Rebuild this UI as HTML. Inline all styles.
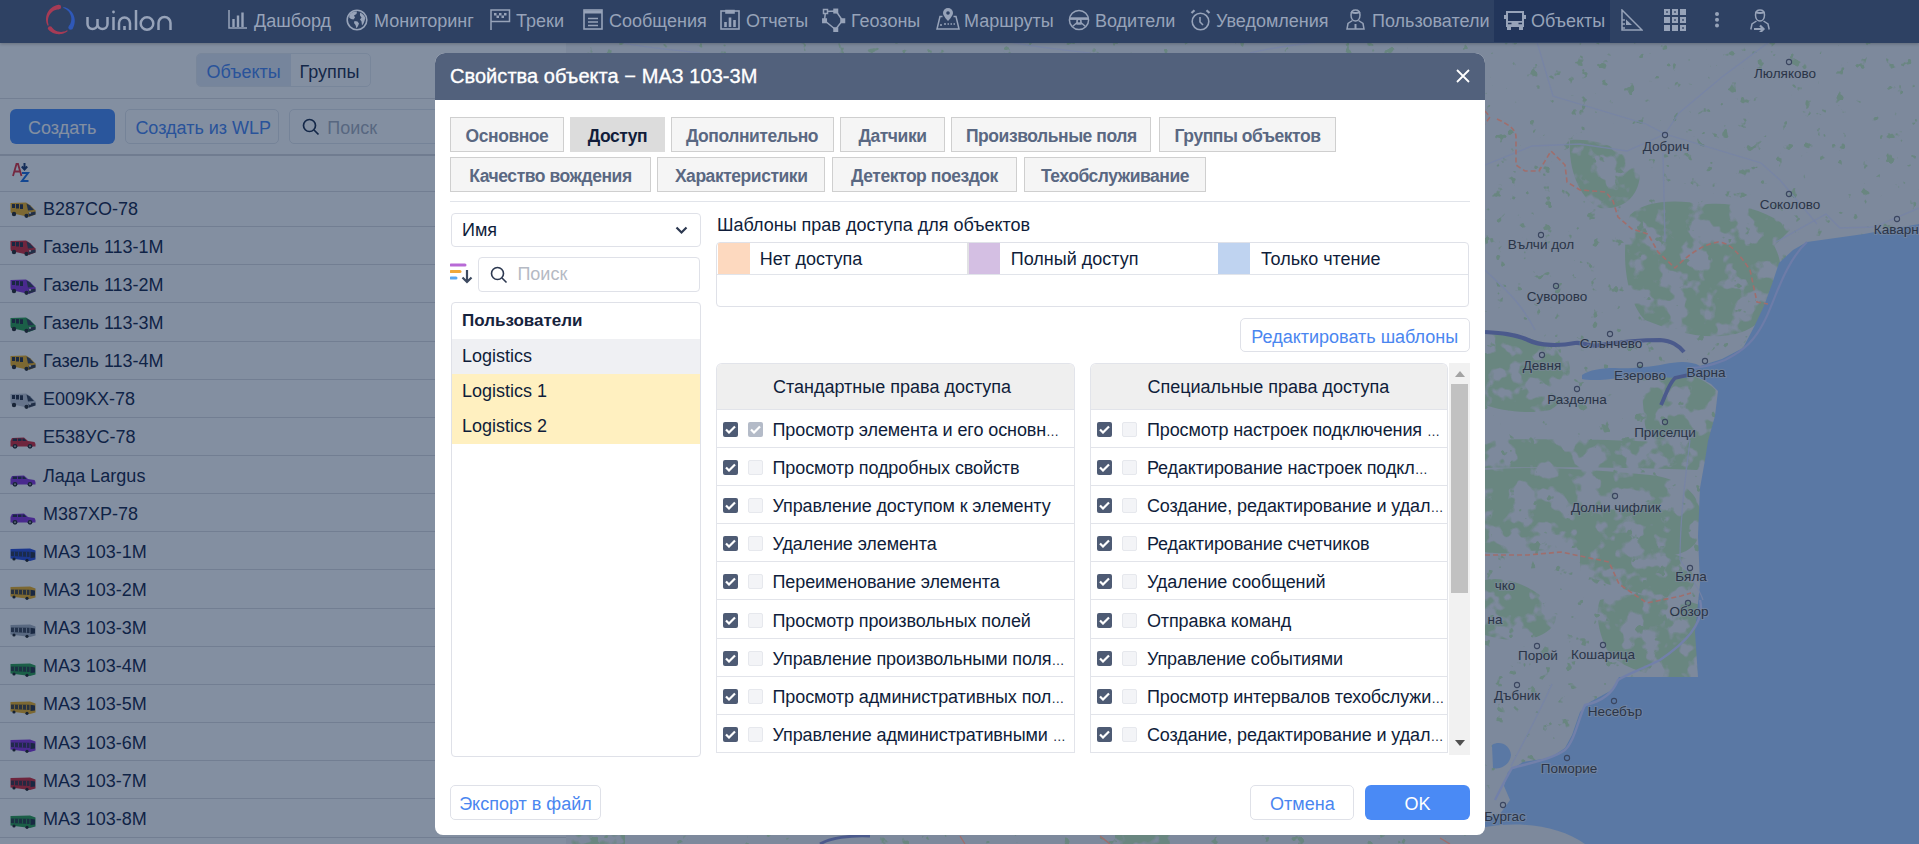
<!DOCTYPE html>
<html><head><meta charset="utf-8">
<style>
*{box-sizing:border-box;margin:0;padding:0}
html,body{width:1919px;height:844px;overflow:hidden;background:#8692a7;font-family:"Liberation Sans",sans-serif;}
.abs{position:absolute}
#hdr{position:absolute;z-index:5;left:0;top:0;width:1919px;height:42.5px;box-shadow:0 1px 3px rgba(0,0,0,0.22);background:#2e4163;color:#97a3b9;font-size:18px}
#hdr .it{position:absolute;top:0;height:42px;line-height:42px;white-space:nowrap}
#hdr svg{position:absolute}
#left{position:absolute;left:0;top:42px;width:566px;height:802px;background:#fff;color:#172648;font-size:18px;overflow:hidden}
#map{position:absolute;left:566px;top:42px;width:1353px;height:802px;overflow:hidden;background:#c9d0dc}
#ov{position:absolute;left:0;top:42px;width:566px;height:802px;background:rgba(7,31,67,0.5)}
.row{position:absolute;left:0;width:566px;height:38.15px;border-bottom:1px solid #dcdde0}
.row .nm{position:absolute;left:43px;top:1.5px;line-height:37px;white-space:nowrap}
.row svg{position:absolute;left:10px;top:11px}
#dlg{position:absolute;left:435px;top:53px;width:1050px;height:782px;background:#fff;border-radius:10px 10px 8px 8px;overflow:hidden;color:#0f1d3a;font-size:18px}
#dh{position:absolute;left:0;top:0;width:1050px;height:46.5px;background:#52617c;color:#fff;font-size:20px;-webkit-text-stroke:0.35px #fff;letter-spacing:0.05px}
.tab{position:absolute;height:35px;background:#f5f5f5;border:1px solid #cfcfcf;color:#5a6882;font-weight:bold;font-size:17.5px;letter-spacing:-0.45px;text-align:center;line-height:33px;padding-top:2px;white-space:nowrap}
.tab.act{background:#dcdcdc;border-color:#dcdcdc;color:#111d3a}
.inp{position:absolute;border:1px solid #dfe1e8;border-radius:4px;background:#fff}
.btn{position:absolute;border:1px solid #dfe1e8;border-radius:5px;background:#fff;color:#4a86f0;text-align:center;white-space:nowrap}
.tbl{position:absolute;top:310px;height:389.5px;border:1px solid #e2e4ea;border-bottom:none;border-radius:6px 6px 0 0;overflow:hidden;background:#fff}
.th{position:absolute;left:0;top:0;width:100%;height:46px;background:#efefef;border-bottom:1px solid #e2e4ea}
.th span{position:absolute;left:56px;top:0;line-height:46px;white-space:nowrap}
.tr{position:absolute;left:0;width:100%;height:38.1px;border-bottom:1px solid #e2e4ea}
.tr .t{position:absolute;left:55.5px;top:2px;line-height:37px;white-space:nowrap;letter-spacing:-0.1px}
.el{font-size:13px;letter-spacing:0}
.cb{position:absolute;top:12px;width:15px;height:15px;border-radius:2px}
.cb1{left:6px;background:#4e5b74}
.cb2{left:31px;background:#f3f4f7;border:1px solid #e6e8ed}
.cb2.g{background:#b4bbc8;border:none}
.cb svg{position:absolute;left:2px;top:3px}
</style></head><body>
<div id="hdr">
<svg style="left:44px;top:4px" width="32" height="32" viewBox="0 0 32 32"><path d="M14.67 0.76 L13.46 0.98 L12.29 1.30 L11.15 1.71 L10.05 2.21 L9.00 2.79 L8.01 3.45 L7.07 4.19 L6.21 4.99 L5.41 5.86 L4.69 6.78 L4.04 7.76 L3.49 8.77 L3.01 9.83 L2.63 10.91 L2.33 12.02 L2.13 13.14 L2.01 14.26 L1.99 15.39 L2.06 16.51 L2.21 17.61 L2.45 18.69 L2.78 19.75 L3.19 20.77 L3.67 21.75 L4.76 21.24 L4.45 20.30 L4.21 19.34 L4.05 18.38 L3.97 17.41 L3.96 16.44 L4.04 15.48 L4.19 14.53 L4.41 13.61 L4.71 12.71 L5.07 11.84 L5.50 11.01 L6.00 10.22 L6.55 9.48 L7.15 8.79 L7.81 8.16 L8.51 7.58 L9.25 7.07 L10.02 6.62 L10.82 6.23 L11.65 5.91 L12.49 5.67 L13.35 5.49 L14.21 5.38 L15.07 5.34Z" fill="#a63b55"/><circle cx="14.87" cy="3.05" r="2.3" fill="#a63b55"/><path d="M4.43 25.71 L5.10 26.36 L5.81 26.96 L6.55 27.52 L7.32 28.03 L8.11 28.48 L8.93 28.89 L9.77 29.24 L10.62 29.54 L11.49 29.78 L12.37 29.97 L13.25 30.10 L14.13 30.18 L15.02 30.20 L15.90 30.17 L16.77 30.08 L17.63 29.94 L18.48 29.75 L19.30 29.50 L20.11 29.21 L20.90 28.87 L21.65 28.48 L22.38 28.05 L23.08 27.57 L23.74 27.06 L23.17 26.24 L22.49 26.61 L21.79 26.93 L21.08 27.20 L20.35 27.43 L19.62 27.62 L18.88 27.75 L18.13 27.84 L17.39 27.89 L16.65 27.88 L15.91 27.83 L15.19 27.74 L14.47 27.60 L13.77 27.42 L13.09 27.19 L12.42 26.93 L11.78 26.63 L11.16 26.28 L10.56 25.91 L10.00 25.50 L9.46 25.05 L8.96 24.58 L8.49 24.08 L8.05 23.55 L7.65 23.01Z" fill="#a63b55"/><circle cx="6.04" cy="24.36" r="2.1" fill="#a63b55"/><path d="M19.49 2.96 L20.55 3.21 L21.59 3.55 L22.60 3.97 L23.58 4.47 L24.53 5.05 L25.42 5.71 L26.27 6.45 L27.06 7.25 L27.79 8.12 L28.44 9.06 L29.03 10.04 L29.53 11.07 L29.95 12.15 L30.29 13.27 L30.54 14.41 L30.69 15.57 L30.76 16.75 L30.72 17.94 L30.59 19.12 L30.37 20.30 L30.05 21.46 L29.64 22.60 L29.13 23.71 L28.53 24.78 L24.76 22.14 L25.29 21.46 L25.77 20.73 L26.18 19.96 L26.54 19.15 L26.83 18.32 L27.05 17.46 L27.21 16.57 L27.30 15.67 L27.31 14.76 L27.25 13.85 L27.11 12.94 L26.90 12.03 L26.62 11.14 L26.26 10.27 L25.83 9.43 L25.33 8.62 L24.77 7.85 L24.14 7.12 L23.45 6.43 L22.70 5.81 L21.90 5.24 L21.06 4.73 L20.16 4.29 L19.24 3.93Z" fill="#2f58b8"/><circle cx="26.65" cy="23.46" r="2.3" fill="#2f58b8"/></svg>
<svg style="left:86px;top:9px" width="88" height="23" viewBox="0 0 88 23" fill="none" stroke="#97a3b9" stroke-width="2.5"><path d="M1.5 8 V15 A5 5 0 0 0 11.5 15 V10 M11.5 15 A5 5 0 0 0 21.5 15 V8"/><path d="M27.5 8 V21"/><circle cx="27.5" cy="3" r="1.4" fill="#97a3b9" stroke="none"/><path d="M33 21 V14 A5.5 5.5 0 0 1 44 14 V21"/><path d="M38.5 17 V21" stroke-width="2.6"/><path d="M50 1 V21"/><circle cx="61" cy="14.5" r="6.3"/><path d="M72.5 21 V14 A6 6 0 0 1 84.5 14 V21"/></svg>
<svg style="left:228px;top:10px" width="20" height="19" viewBox="0 0 20 19" fill="none" stroke="#97a3b9" stroke-width="1.5"><path d="M1 0 V18 H19"/><path d="M5.5 17 V9 M10 17 V5.5 M14.5 17 V2.5" stroke-width="2.4"/></svg>
<div class="it" style="left:254px">Дашборд</div>
<svg style="left:346px;top:9px" width="22" height="22" viewBox="0 0 22 22"><circle cx="11" cy="11" r="9.8" fill="none" stroke="#97a3b9" stroke-width="1.6"/><path d="M3.5 6 C5 3.5 8 2.2 11 2.5 L10.5 5 L8 6.5 L9 8.5 L7.5 10.5 L5 10 L3.2 8.5 Z M8.5 12 L11.5 12.5 L13 14.5 L12 17 L10.5 19.5 L9.5 16 L8 14 Z M14 3.5 C16.5 4.5 18.5 6.5 19.3 9 L18.5 12 L17.5 14.5 L16 16.5 L15.5 12.5 L14 10.5 L15.5 8.5 L14 6.5 Z" fill="#97a3b9"/></svg>
<div class="it" style="left:374px">Мониторинг</div>
<svg style="left:490px;top:9px" width="21" height="21" viewBox="0 0 21 21" fill="none" stroke="#97a3b9" stroke-width="1.5"><path d="M1 21 V1 H19.5 V12.5 H1"/><path d="M4 4 h2.5 v2.5 h-2.5z M9 4 h2.5 v2.5 h-2.5z M14 4 h2.5 v2.5 h-2.5z M6.5 6.5 h2.5 v2.5 h-2.5z M11.5 6.5 h2.5 v2.5 h-2.5z" fill="#97a3b9" stroke="none"/></svg>
<div class="it" style="left:516px">Треки</div>
<svg style="left:583px;top:9px" width="20" height="21" viewBox="0 0 20 21" fill="none" stroke="#97a3b9" stroke-width="1.6"><rect x="1" y="1" width="18" height="19"/><path d="M1 3 H19" stroke-width="3"/><path d="M5 9.5 H15 M5 13 H15 M5 16.5 H15"/></svg>
<div class="it" style="left:609px">Сообщения</div>
<svg style="left:720px;top:8px" width="20" height="22" viewBox="0 0 20 22" fill="none" stroke="#97a3b9" stroke-width="1.6"><rect x="1" y="3" width="18" height="18"/><path d="M6 2.5 H14 V5 H6 Z" fill="#97a3b9"/><path d="M5.5 19 V14 M10 19 V9.5 M14.5 19 V12" stroke-width="2.6"/></svg>
<div class="it" style="left:746px">Отчеты</div>
<svg style="left:822px;top:8px" width="24" height="24" viewBox="0 0 24 24" fill="none" stroke="#97a3b9" stroke-width="1.5"><path d="M3.5 3.5 L14 3 L20.5 12.5 L13.5 21.5 L2.5 12.5 Z"/><rect x="1.5" y="1.5" width="4" height="4" fill="#2e4163"/><rect x="12" y="1.3" width="3.5" height="3.5" fill="#97a3b9"/><rect x="19" y="11" width="3.5" height="3.5" fill="#97a3b9"/><rect x="12" y="20" width="3.5" height="3.5" fill="#97a3b9"/><rect x="0.8" y="11" width="3.5" height="3.5" fill="#97a3b9"/></svg>
<div class="it" style="left:851px">Геозоны</div>
<svg style="left:936px;top:7px" width="24" height="23" viewBox="0 0 24 23"><path d="M12 1 A5 5 0 0 1 17 6 C17 9 12 14 12 14 C12 14 7 9 7 6 A5 5 0 0 1 12 1 Z" fill="#97a3b9"/><circle cx="12" cy="6" r="1.8" fill="#2e4163"/><path d="M6.5 9.5 H4 L1 22 H23 L20 9.5 H17.5" fill="none" stroke="#97a3b9" stroke-width="1.5"/><path d="M4 18 H6 M8 17 H10 M11.5 17 H13 M14.5 17 H16 M17.5 17 H19" stroke="#97a3b9" stroke-width="1.5"/></svg>
<div class="it" style="left:964px">Маршруты</div>
<svg style="left:1068px;top:8.5px" width="22" height="22" viewBox="0 0 22 22" fill="none" stroke="#97a3b9" stroke-width="1.5"><circle cx="11" cy="11" r="9.6"/><rect x="1.5" y="8.3" width="19" height="2.6" fill="#97a3b9" stroke="none"/><circle cx="11" cy="12.3" r="2" stroke-width="1.6"/><path d="M9.2 13.5 L4.5 17.5 M12.8 13.5 L17.5 17.5 M8.5 15 H13.5"/></svg>
<div class="it" style="left:1095px">Водители</div>
<svg style="left:1190px;top:9px" width="21" height="22" viewBox="0 0 21 22" fill="none" stroke="#97a3b9" stroke-width="1.6"><circle cx="10.5" cy="12.5" r="8.3"/><path d="M10 8 V13 L13 16"/><path d="M1.5 4 L4.5 1.2 M19.5 4 L16.5 1.2" stroke-width="2.2"/></svg>
<div class="it" style="left:1216px">Уведомления</div>
<svg style="left:1346px;top:9px" width="19" height="21" viewBox="0 0 19 21" fill="none" stroke="#97a3b9" stroke-width="1.5"><path d="M9.5 1 C6 1 5 3.5 5 6 C5 9.5 7 12 9.5 12 C12 12 14 9.5 14 6 C14 3.5 13 1 9.5 1 Z"/><path d="M5 2.8 Q9.5 5 14 2.8" stroke-width="2"/><path d="M6.5 11.5 L2 14.5 L1 20 H18 L17 14.5 L12.5 11.5"/><path d="M9.5 15 V20" stroke-width="2"/></svg>
<div class="it" style="left:1372px">Пользователи</div>
<div class="abs" style="left:1494px;top:0;width:116px;height:42px;background:#22355a"></div>
<svg style="left:1504px;top:11px" width="22" height="19" viewBox="0 0 22 19"><path d="M3 1 H19 V12 H3 Z" fill="none" stroke="#97a3b9" stroke-width="2"/><path d="M2 10 H20 V16 H2 Z" fill="#97a3b9"/><path d="M3 15 H7 V19 H3 Z M15 15 H19 V19 H15 Z" fill="#97a3b9"/><path d="M0 4 H2 V8 H0 Z M20 4 H22 V8 H20 Z" fill="#97a3b9"/><path d="M4 12.5 H7.5 M14.5 12.5 H18" stroke="#22355a" stroke-width="1.4"/></svg>
<div class="it" style="left:1531px">Объекты</div>
<svg style="left:1621px;top:9px" width="22" height="22" viewBox="0 0 22 22" fill="none" stroke="#97a3b9" stroke-width="1.5"><path d="M1 1 V21 H21 Z"/><path d="M1 11 H4 M1 15 H4 M1 19 H4"/><path d="M5 10.5 L11 16 H5 Z" fill="#97a3b9" stroke="none"/></svg>
<svg style="left:1664px;top:9px" width="22" height="22" viewBox="0 0 22 22" fill="#97a3b9"><rect x="0" y="0" width="6" height="6"/><rect x="8" y="0" width="6" height="6"/><rect x="16" y="0" width="6" height="6"/><rect x="0" y="8" width="6" height="6"/><rect x="8" y="8" width="6" height="6"/><rect x="16" y="8" width="6" height="6"/><rect x="0" y="16" width="6" height="6"/><rect x="8" y="16" width="6" height="6"/><rect x="16" y="16" width="6" height="6"/><g fill="#2e4163"><rect x="2.2" y="2.2" width="1.6" height="1.6"/><rect x="10.2" y="2.2" width="1.6" height="1.6"/><rect x="10.2" y="10.2" width="1.6" height="1.6"/><rect x="18.2" y="10.2" width="1.6" height="1.6"/><rect x="18.2" y="18.2" width="1.6" height="1.6"/></g></svg>
<svg style="left:1714px;top:11px" width="6" height="18" viewBox="0 0 6 18" fill="#97a3b9"><circle cx="3" cy="3" r="2"/><circle cx="3" cy="8.7" r="2"/><circle cx="3" cy="14.5" r="2"/></svg>
<svg style="left:1750px;top:9px" width="20" height="23" viewBox="0 0 20 23" fill="none" stroke="#97a3b9" stroke-width="1.5"><path d="M10 1 C6.5 1 5.5 3.5 5.5 6 C5.5 9.5 7.5 12 10 12 C12.5 12 14.5 9.5 14.5 6 C14.5 3.5 13.5 1 10 1 Z"/><path d="M5.5 3 Q10 5 14.5 3" stroke-width="2"/><path d="M6.5 12 L2 15 L0.8 20.5 M13.5 12 L18 15 L19.2 20.5"/><path d="M4 20 H12 M10 16.5 L13.5 20 L10 23.5" stroke-width="2.2"/></svg>
</div>

<div id="left">
<div class="abs" style="left:195.5px;top:11.3px;width:175px;height:34px;border:1px solid #e9ecf1;border-radius:5px;overflow:hidden"><div class="abs" style="left:0;top:0;width:94px;height:34px;background:#e4eaf5"></div><div class="abs" style="left:10px;top:2px;line-height:32px;color:#4a86f0">Объекты</div><div class="abs" style="left:103px;top:2px;line-height:32px;color:#1f2f4d">Группы</div></div>
<div class="abs" style="left:0;top:56px;width:566px;height:1px;background:#dedfe2"></div>
<div class="abs" style="left:10px;top:67px;width:104.5px;height:34.5px;border-radius:6px;background:#4c8cf5;color:#fff;text-align:center;line-height:34px;padding-top:1.5px">Создать</div>
<div class="abs" style="left:125px;top:67px;width:153.5px;height:34.5px;border-radius:5px;border:1px solid #e3e6ec;color:#4a86f0;text-align:center;line-height:32px;padding-top:1.5px;padding-left:3px">Создать из WLP</div>
<div class="abs" style="left:289.3px;top:67px;width:300px;height:34.5px;border-radius:5px;border:1px solid #e3e6ec"><svg class="abs" style="left:12px;top:8px" width="18" height="18" viewBox="0 0 18 18" fill="none" stroke="#1f2f4d" stroke-width="1.7"><circle cx="7.5" cy="7.5" r="6"/><path d="M12 12 L16.5 16.5"/></svg><div class="abs" style="left:37px;top:1.5px;line-height:32px;color:#a8afbc">Поиск</div></div>
<div class="abs" style="left:0;top:112px;width:566px;height:2px;background:#d8d9dc"></div>
<svg class="abs" style="left:12px;top:120px" width="22" height="21" viewBox="0 0 22 21"><path d="M1 14 L4.5 2 H6 L9.5 14 M2.5 9.5 H8" fill="none" stroke="#e0303c" stroke-width="1.8"/><path d="M12.5 1 V6.5 M9.8 4.5 L12.5 7.5 L15.2 4.5" fill="none" stroke="#1f3a6e" stroke-width="2"/><path d="M10 11 H16 L10 19 H16.5" fill="none" stroke="#1f6fe0" stroke-width="2"/></svg>
<div class="abs" style="left:0;top:149px;width:566px;height:1px;background:#dcdde0"></div>
<div class="row" style="top:147.00px"><svg width="26" height="16" viewBox="0 0 26 16" style="top:13.3px"><path d="M0.5 1 L16 0.5 L20 3 L25.5 8.5 L25.5 12.5 L19 15 L1 11 L0.5 9 Z" fill="#f0b020"/><path d="M2 2 H5 V6 H2 Z M6 2 H9 V6.5 H6 Z M10 2.2 H13 V7 H10 Z" fill="#2b3140"/><path d="M16.5 1.5 L19.5 3.2 L24 8 L18 8.5 Z" fill="#3a4252"/><path d="M18.5 11 L25.5 9.5 L25.5 12.5 L19 14.5 Z" fill="#3a3f4a"/><circle cx="4" cy="12" r="2.2" fill="#2a2a2a"/><circle cx="16.5" cy="13.8" r="2.1" fill="#2a2a2a"/><rect x="19" y="10.3" width="2" height="1.3" fill="#fff"/></svg><div class="nm">B287CO-78</div></div>
<div class="row" style="top:185.15px"><svg width="26" height="16" viewBox="0 0 26 16" style="top:13.3px"><path d="M0.5 1 L16 0.5 L20 3 L25.5 8.5 L25.5 12.5 L19 15 L1 11 L0.5 9 Z" fill="#d42a36"/><path d="M2 2 H5 V6 H2 Z M6 2 H9 V6.5 H6 Z M10 2.2 H13 V7 H10 Z" fill="#2b3140"/><path d="M16.5 1.5 L19.5 3.2 L24 8 L18 8.5 Z" fill="#3a4252"/><path d="M18.5 11 L25.5 9.5 L25.5 12.5 L19 14.5 Z" fill="#3a3f4a"/><circle cx="4" cy="12" r="2.2" fill="#2a2a2a"/><circle cx="16.5" cy="13.8" r="2.1" fill="#2a2a2a"/><rect x="19" y="10.3" width="2" height="1.3" fill="#fff"/></svg><div class="nm">Газель 113-1M</div></div>
<div class="row" style="top:223.30px"><svg width="26" height="16" viewBox="0 0 26 16" style="top:13.3px"><path d="M0.5 1 L16 0.5 L20 3 L25.5 8.5 L25.5 12.5 L19 15 L1 11 L0.5 9 Z" fill="#8a35d8"/><path d="M2 2 H5 V6 H2 Z M6 2 H9 V6.5 H6 Z M10 2.2 H13 V7 H10 Z" fill="#2b3140"/><path d="M16.5 1.5 L19.5 3.2 L24 8 L18 8.5 Z" fill="#3a4252"/><path d="M18.5 11 L25.5 9.5 L25.5 12.5 L19 14.5 Z" fill="#3a3f4a"/><circle cx="4" cy="12" r="2.2" fill="#2a2a2a"/><circle cx="16.5" cy="13.8" r="2.1" fill="#2a2a2a"/><rect x="19" y="10.3" width="2" height="1.3" fill="#fff"/></svg><div class="nm">Газель 113-2M</div></div>
<div class="row" style="top:261.45px"><svg width="26" height="16" viewBox="0 0 26 16" style="top:13.3px"><path d="M0.5 1 L16 0.5 L20 3 L25.5 8.5 L25.5 12.5 L19 15 L1 11 L0.5 9 Z" fill="#2f9e4c"/><path d="M2 2 H5 V6 H2 Z M6 2 H9 V6.5 H6 Z M10 2.2 H13 V7 H10 Z" fill="#2b3140"/><path d="M16.5 1.5 L19.5 3.2 L24 8 L18 8.5 Z" fill="#3a4252"/><path d="M18.5 11 L25.5 9.5 L25.5 12.5 L19 14.5 Z" fill="#3a3f4a"/><circle cx="4" cy="12" r="2.2" fill="#2a2a2a"/><circle cx="16.5" cy="13.8" r="2.1" fill="#2a2a2a"/><rect x="19" y="10.3" width="2" height="1.3" fill="#fff"/></svg><div class="nm">Газель 113-3M</div></div>
<div class="row" style="top:299.60px"><svg width="26" height="16" viewBox="0 0 26 16" style="top:13.3px"><path d="M0.5 1 L16 0.5 L20 3 L25.5 8.5 L25.5 12.5 L19 15 L1 11 L0.5 9 Z" fill="#f0b020"/><path d="M2 2 H5 V6 H2 Z M6 2 H9 V6.5 H6 Z M10 2.2 H13 V7 H10 Z" fill="#2b3140"/><path d="M16.5 1.5 L19.5 3.2 L24 8 L18 8.5 Z" fill="#3a4252"/><path d="M18.5 11 L25.5 9.5 L25.5 12.5 L19 14.5 Z" fill="#3a3f4a"/><circle cx="4" cy="12" r="2.2" fill="#2a2a2a"/><circle cx="16.5" cy="13.8" r="2.1" fill="#2a2a2a"/><rect x="19" y="10.3" width="2" height="1.3" fill="#fff"/></svg><div class="nm">Газель 113-4M</div></div>
<div class="row" style="top:337.75px"><svg width="26" height="16" viewBox="0 0 26 16" style="top:13.3px"><path d="M0.5 1 L16 0.5 L20 3 L25.5 8.5 L25.5 12.5 L19 15 L1 11 L0.5 9 Z" fill="#c4c9d2"/><path d="M2 2 H5 V6 H2 Z M6 2 H9 V6.5 H6 Z M10 2.2 H13 V7 H10 Z" fill="#2b3140"/><path d="M16.5 1.5 L19.5 3.2 L24 8 L18 8.5 Z" fill="#3a4252"/><path d="M18.5 11 L25.5 9.5 L25.5 12.5 L19 14.5 Z" fill="#3a3f4a"/><circle cx="4" cy="12" r="2.2" fill="#2a2a2a"/><circle cx="16.5" cy="13.8" r="2.1" fill="#2a2a2a"/><rect x="19" y="10.3" width="2" height="1.3" fill="#fff"/></svg><div class="nm">E009KX-78</div></div>
<div class="row" style="top:375.90px"><svg width="26" height="12" viewBox="0 0 26 12" style="top:19.2px"><path d="M0.5 4 L2 1 L14 0.5 L18 4 L24.5 5 L25.5 7 L25.5 9.5 L0.5 9.5 Z" fill="#d42a36"/><path d="M3 1.5 H7 V4 H2.5 Z M8 1.5 H11.5 V4 H8 Z M12.5 1.5 H14 L16.5 4 H12.5 Z" fill="#2b3140"/><circle cx="5" cy="9.3" r="2.4" fill="#2a2a2a"/><circle cx="20" cy="9.3" r="2.4" fill="#2a2a2a"/><circle cx="5" cy="9.3" r="1" fill="#aaa"/><circle cx="20" cy="9.3" r="1" fill="#aaa"/></svg><div class="nm">E538УС-78</div></div>
<div class="row" style="top:414.05px"><svg width="26" height="12" viewBox="0 0 26 12" style="top:19.2px"><path d="M0.5 4 L2 1 L14 0.5 L18 4 L24.5 5 L25.5 7 L25.5 9.5 L0.5 9.5 Z" fill="#8a35d8"/><path d="M3 1.5 H7 V4 H2.5 Z M8 1.5 H11.5 V4 H8 Z M12.5 1.5 H14 L16.5 4 H12.5 Z" fill="#2b3140"/><circle cx="5" cy="9.3" r="2.4" fill="#2a2a2a"/><circle cx="20" cy="9.3" r="2.4" fill="#2a2a2a"/><circle cx="5" cy="9.3" r="1" fill="#aaa"/><circle cx="20" cy="9.3" r="1" fill="#aaa"/></svg><div class="nm">Лада Largus</div></div>
<div class="row" style="top:452.20px"><svg width="26" height="12" viewBox="0 0 26 12" style="top:19.2px"><path d="M0.5 4 L2 1 L14 0.5 L18 4 L24.5 5 L25.5 7 L25.5 9.5 L0.5 9.5 Z" fill="#8a35d8"/><path d="M3 1.5 H7 V4 H2.5 Z M8 1.5 H11.5 V4 H8 Z M12.5 1.5 H14 L16.5 4 H12.5 Z" fill="#2b3140"/><circle cx="5" cy="9.3" r="2.4" fill="#2a2a2a"/><circle cx="20" cy="9.3" r="2.4" fill="#2a2a2a"/><circle cx="5" cy="9.3" r="1" fill="#aaa"/><circle cx="20" cy="9.3" r="1" fill="#aaa"/></svg><div class="nm">M387XP-78</div></div>
<div class="row" style="top:490.35px"><svg width="26" height="14" viewBox="0 0 26 14" style="top:15.8px"><path d="M0.5 1 L20 0.5 L25.5 2.5 L25.5 11.5 L20 13 L0.5 10.5 Z" fill="#2e4fd6"/><path d="M1 3.5 L19.5 3.8 L19.5 9 L1 8 Z" fill="#2b3140" opacity=".85"/><path d="M20.5 3.8 L25 4.5 L25 9.5 L20.5 10 Z" fill="#2b3140"/><path d="M4.5 3.5 V8.2 M8.5 3.6 V8.4 M12.5 3.7 V8.6 M16.5 3.7 V8.8" stroke="#2e4fd6" stroke-width="0.9"/><circle cx="4" cy="11" r="1.6" fill="#222"/><circle cx="17" cy="12.3" r="1.6" fill="#222"/></svg><div class="nm">МАЗ 103-1М</div></div>
<div class="row" style="top:528.50px"><svg width="26" height="14" viewBox="0 0 26 14" style="top:15.8px"><path d="M0.5 1 L20 0.5 L25.5 2.5 L25.5 11.5 L20 13 L0.5 10.5 Z" fill="#f0b020"/><path d="M1 3.5 L19.5 3.8 L19.5 9 L1 8 Z" fill="#2b3140" opacity=".85"/><path d="M20.5 3.8 L25 4.5 L25 9.5 L20.5 10 Z" fill="#2b3140"/><path d="M4.5 3.5 V8.2 M8.5 3.6 V8.4 M12.5 3.7 V8.6 M16.5 3.7 V8.8" stroke="#f0b020" stroke-width="0.9"/><circle cx="4" cy="11" r="1.6" fill="#222"/><circle cx="17" cy="12.3" r="1.6" fill="#222"/></svg><div class="nm">МАЗ 103-2М</div></div>
<div class="row" style="top:566.65px"><svg width="26" height="14" viewBox="0 0 26 14" style="top:15.8px"><path d="M0.5 1 L20 0.5 L25.5 2.5 L25.5 11.5 L20 13 L0.5 10.5 Z" fill="#aab2be"/><path d="M1 3.5 L19.5 3.8 L19.5 9 L1 8 Z" fill="#2b3140" opacity=".85"/><path d="M20.5 3.8 L25 4.5 L25 9.5 L20.5 10 Z" fill="#2b3140"/><path d="M4.5 3.5 V8.2 M8.5 3.6 V8.4 M12.5 3.7 V8.6 M16.5 3.7 V8.8" stroke="#aab2be" stroke-width="0.9"/><circle cx="4" cy="11" r="1.6" fill="#222"/><circle cx="17" cy="12.3" r="1.6" fill="#222"/></svg><div class="nm">МАЗ 103-3М</div></div>
<div class="row" style="top:604.80px"><svg width="26" height="14" viewBox="0 0 26 14" style="top:15.8px"><path d="M0.5 1 L20 0.5 L25.5 2.5 L25.5 11.5 L20 13 L0.5 10.5 Z" fill="#2f9e4c"/><path d="M1 3.5 L19.5 3.8 L19.5 9 L1 8 Z" fill="#2b3140" opacity=".85"/><path d="M20.5 3.8 L25 4.5 L25 9.5 L20.5 10 Z" fill="#2b3140"/><path d="M4.5 3.5 V8.2 M8.5 3.6 V8.4 M12.5 3.7 V8.6 M16.5 3.7 V8.8" stroke="#2f9e4c" stroke-width="0.9"/><circle cx="4" cy="11" r="1.6" fill="#222"/><circle cx="17" cy="12.3" r="1.6" fill="#222"/></svg><div class="nm">МАЗ 103-4М</div></div>
<div class="row" style="top:642.95px"><svg width="26" height="14" viewBox="0 0 26 14" style="top:15.8px"><path d="M0.5 1 L20 0.5 L25.5 2.5 L25.5 11.5 L20 13 L0.5 10.5 Z" fill="#f0b020"/><path d="M1 3.5 L19.5 3.8 L19.5 9 L1 8 Z" fill="#2b3140" opacity=".85"/><path d="M20.5 3.8 L25 4.5 L25 9.5 L20.5 10 Z" fill="#2b3140"/><path d="M4.5 3.5 V8.2 M8.5 3.6 V8.4 M12.5 3.7 V8.6 M16.5 3.7 V8.8" stroke="#f0b020" stroke-width="0.9"/><circle cx="4" cy="11" r="1.6" fill="#222"/><circle cx="17" cy="12.3" r="1.6" fill="#222"/></svg><div class="nm">МАЗ 103-5М</div></div>
<div class="row" style="top:681.10px"><svg width="26" height="14" viewBox="0 0 26 14" style="top:15.8px"><path d="M0.5 1 L20 0.5 L25.5 2.5 L25.5 11.5 L20 13 L0.5 10.5 Z" fill="#8a35d8"/><path d="M1 3.5 L19.5 3.8 L19.5 9 L1 8 Z" fill="#2b3140" opacity=".85"/><path d="M20.5 3.8 L25 4.5 L25 9.5 L20.5 10 Z" fill="#2b3140"/><path d="M4.5 3.5 V8.2 M8.5 3.6 V8.4 M12.5 3.7 V8.6 M16.5 3.7 V8.8" stroke="#8a35d8" stroke-width="0.9"/><circle cx="4" cy="11" r="1.6" fill="#222"/><circle cx="17" cy="12.3" r="1.6" fill="#222"/></svg><div class="nm">МАЗ 103-6М</div></div>
<div class="row" style="top:719.25px"><svg width="26" height="14" viewBox="0 0 26 14" style="top:15.8px"><path d="M0.5 1 L20 0.5 L25.5 2.5 L25.5 11.5 L20 13 L0.5 10.5 Z" fill="#d42a36"/><path d="M1 3.5 L19.5 3.8 L19.5 9 L1 8 Z" fill="#2b3140" opacity=".85"/><path d="M20.5 3.8 L25 4.5 L25 9.5 L20.5 10 Z" fill="#2b3140"/><path d="M4.5 3.5 V8.2 M8.5 3.6 V8.4 M12.5 3.7 V8.6 M16.5 3.7 V8.8" stroke="#d42a36" stroke-width="0.9"/><circle cx="4" cy="11" r="1.6" fill="#222"/><circle cx="17" cy="12.3" r="1.6" fill="#222"/></svg><div class="nm">МАЗ 103-7М</div></div>
<div class="row" style="top:757.40px"><svg width="26" height="14" viewBox="0 0 26 14" style="top:15.8px"><path d="M0.5 1 L20 0.5 L25.5 2.5 L25.5 11.5 L20 13 L0.5 10.5 Z" fill="#2f9e4c"/><path d="M1 3.5 L19.5 3.8 L19.5 9 L1 8 Z" fill="#2b3140" opacity=".85"/><path d="M20.5 3.8 L25 4.5 L25 9.5 L20.5 10 Z" fill="#2b3140"/><path d="M4.5 3.5 V8.2 M8.5 3.6 V8.4 M12.5 3.7 V8.6 M16.5 3.7 V8.8" stroke="#2f9e4c" stroke-width="0.9"/><circle cx="4" cy="11" r="1.6" fill="#222"/><circle cx="17" cy="12.3" r="1.6" fill="#222"/></svg><div class="nm">МАЗ 103-8М</div></div>
</div>
<div id="map"><svg width="1353" height="802" viewBox="566 42 1353 802" style="position:absolute;left:0;top:0">
<defs>
<filter id="fd" x="566" y="42" width="1353" height="802" filterUnits="userSpaceOnUse" color-interpolation-filters="sRGB">
<feTurbulence type="fractalNoise" baseFrequency="0.045" numOctaves="3" seed="7" result="n"/>
<feColorMatrix in="n" type="matrix" values="0 0 0 0 0.41  0 0 0 0 0.525  0 0 0 0 0.5  12 0 0 0 -5.2" result="g"/>
<feComposite in="g" in2="SourceGraphic" operator="in"/>
</filter>
<filter id="fs" x="566" y="42" width="1353" height="802" filterUnits="userSpaceOnUse" color-interpolation-filters="sRGB">
<feTurbulence type="fractalNoise" baseFrequency="0.085" numOctaves="3" seed="11" result="n"/>
<feColorMatrix in="n" type="matrix" values="0 0 0 0 0.41  0 0 0 0 0.525  0 0 0 0 0.5  16 0 0 0 -11.2" result="g"/>
<feComposite in="g" in2="SourceGraphic" operator="in"/>
</filter>
</defs>
<rect x="566" y="42" width="1353" height="802" fill="#7d899c"/>
<g filter="url(#fs)"><rect x="566" y="42" width="1353" height="802" fill="#000"/></g>
<g filter="url(#fd)">
<path d="M1630 215 C1650 195 1700 200 1730 212 C1760 222 1785 245 1780 280 C1775 310 1760 330 1730 335 C1700 340 1670 330 1645 320 C1625 300 1620 250 1630 215Z" fill="#000"/>
<path d="M1485 335 C1510 330 1540 340 1565 352 C1575 370 1570 400 1550 410 C1525 415 1500 410 1485 405Z" fill="#000"/>
<path d="M1640 372 C1670 365 1705 375 1720 395 C1725 425 1715 455 1700 470 C1675 470 1650 450 1645 425Z" fill="#000"/>
<path d="M1485 470 C1530 465 1600 470 1650 475 C1690 480 1705 500 1700 530 C1698 550 1680 560 1640 555 C1600 550 1560 548 1520 552 C1500 555 1485 552 1485 552Z" fill="#000"/>
<path d="M1580 540 C1610 535 1650 545 1690 560 C1700 580 1695 595 1670 598 C1640 595 1600 585 1580 570Z" fill="#000"/>
<path d="M1600 600 C1630 590 1670 595 1700 605 C1702 630 1700 660 1698 677 C1660 680 1630 672 1610 655 C1598 635 1595 612 1600 600Z" fill="#000"/>
<path d="M1485 580 C1510 575 1540 590 1555 610 C1560 625 1545 640 1515 640 C1500 640 1485 635 1485 635Z" fill="#000"/>
<path d="M1485 440 C1550 438 1650 440 1705 445 L1700 470 C1650 468 1550 466 1485 468Z" fill="#000"/>
<path d="M1570 140 C1600 138 1630 150 1640 175 C1638 200 1620 210 1600 208 C1580 200 1568 170 1570 140Z" fill="#000"/>
<path d="M1700 205 C1730 200 1770 210 1790 230 L1770 250 C1740 248 1710 240 1700 225Z" fill="#000"/>
<path d="M566 832 H625 V844 H566Z" fill="#000"/>
<path d="M1115 832 H1170 V844 H1115Z" fill="#000"/>
</g>
<path d="M1919 224 L1864 234 L1807 242 L1793 250 L1779 263 L1772 284 L1764 306 L1754 327 L1743 348 L1722 359 L1700 366 L1684 371 L1700 378 L1711 384 L1718 391 L1715 416 L1708 441 L1705 460 L1700 488 L1698 536 L1700 584 L1695 632 L1698 677 L1648 677 L1619 677 L1612 690 L1590 702 L1580 712 L1572 735 L1565 748 L1550 758 L1523 762 L1508 772 L1504 786 L1510 800 L1500 814 L1480 818 L1480 844 L1919 844 Z" fill="#5a78a4"/>
<path d="M1582 375 C1590 370 1600 368 1615 368 C1630 369 1650 367 1665 364 C1675 362 1690 360 1700 366 L1690 378 C1670 378 1640 377 1620 378 C1605 380 1590 381 1582 379Z" fill="#5a78a4"/>
<path d="M1480 828 C1520 820 1560 826 1585 844 H1480Z" fill="#7d899c"/>
<path d="M1492 745 C1500 740 1510 745 1511 755 C1510 765 1500 770 1493 768Z" fill="#5a78a4"/>
<path d="M1537 42 L1553 96 L1646 124 L1665 134" fill="none" stroke="#7784a6" stroke-width="1.3" opacity="0.85"/>
<path d="M1665 134 L1679 113 L1722 77 L1769 42" fill="none" stroke="#7784a6" stroke-width="1.3" opacity="0.85"/>
<path d="M1665 134 L1761 163 L1780 180 L1817 224" fill="none" stroke="#7784a6" stroke-width="1.3" opacity="0.85"/>
<path d="M1485 165 L1532 146 L1580 144 L1627 151 L1665 134" fill="none" stroke="#7784a6" stroke-width="1.3" opacity="0.85"/>
<path d="M1663 153 L1665 242" fill="none" stroke="#7784a6" stroke-width="1.3" opacity="0.85"/>
<path d="M1485 270 C1500 285 1520 300 1535 330" fill="none" stroke="#7784a6" stroke-width="1.3" opacity="0.85"/>
<path d="M1776 242 L1826 214 L1840 228 L1874 227 L1919 208" fill="none" stroke="#7784a6" stroke-width="1.3" opacity="0.85"/>
<path d="M1690 440 C1685 480 1680 520 1680 560" fill="none" stroke="#7784a6" stroke-width="1.3" opacity="0.85"/>
<path d="M1680 560 C1690 575 1700 590 1703 600" fill="none" stroke="#7784a6" stroke-width="1.3" opacity="0.85"/>
<path d="M1552 684 C1545 700 1530 730 1511 766" fill="none" stroke="#7784a6" stroke-width="1.3" opacity="0.85"/>
<path d="M620 42 C640 48 680 50 700 53" fill="none" stroke="#7784a6" stroke-width="1.3" opacity="0.85"/>
<path d="M1010 42 C1040 48 1070 50 1090 53" fill="none" stroke="#7784a6" stroke-width="1.3" opacity="0.85"/>
<path d="M1250 53 C1270 48 1290 45 1320 42" fill="none" stroke="#7784a6" stroke-width="1.3" opacity="0.85"/>
<path d="M1807 242 C1785 262 1775 300 1765 320 C1755 340 1745 350 1725 360 C1710 366 1700 368 1690 368" fill="none" stroke="#6d7ca8" stroke-width="2.2"/>
<path d="M1700 600 C1705 620 1690 640 1660 660 C1640 670 1625 675 1618 680 C1612 695 1600 702 1585 705 C1578 720 1575 740 1565 750 C1550 760 1530 763 1512 768 C1505 780 1500 790 1495 800" fill="none" stroke="#7280aa" stroke-width="2.4"/>
<path d="M1485 332 C1500 333 1515 334 1528 340 C1540 346 1560 346 1575 343 C1587 342 1590 348 1600 345 C1620 342 1640 340 1660 340 C1672 341 1678 345 1684 352" fill="none" stroke="#4b5a8c" stroke-width="4.2"/>
<path d="M1688 375 L1675 378 C1668 385 1666 395 1661 405" fill="none" stroke="#4b5a8c" stroke-width="3.8"/>
<path d="M820 844 C830 838 850 835 870 836" fill="none" stroke="#4b5a8c" stroke-width="3"/>
<path d="M1485 111 L1490 117 L1485 124 M1497 119 C1510 125 1516 130 1516 137 L1516 165 L1525 171 L1539 171 L1551 151 L1565 165 L1567 182 L1580 190 L1606 192 L1613 201 L1618 217 L1632 229 L1648 234 L1658 252 L1675 268 C1685 258 1700 245 1718 242 C1730 242 1740 255 1750 270 L1757 302 L1768 304" fill="none" stroke="#a06e6c" stroke-width="1.6" stroke-dasharray="5 3"/>
<path d="M1485 555 L1528 555 L1561 552 L1609 562 L1619 584 L1647 603 L1681 596 L1691 593" fill="none" stroke="#a06e6c" stroke-width="1.6" stroke-dasharray="5 3"/>
<path d="M1100 836 L1110 844 M960 836 L965 844 M1440 838 L1450 844" stroke="#a06e6c" stroke-width="1.4"/>
<circle cx="1789" cy="62" r="2.6" fill="none" stroke="#3b4660" stroke-width="1.1"/>
<circle cx="1665" cy="135" r="2.6" fill="none" stroke="#3b4660" stroke-width="1.1"/>
<circle cx="1789" cy="194" r="2.6" fill="none" stroke="#3b4660" stroke-width="1.1"/>
<circle cx="1897" cy="219" r="2.6" fill="none" stroke="#3b4660" stroke-width="1.1"/>
<circle cx="1541" cy="235" r="2.6" fill="none" stroke="#3b4660" stroke-width="1.1"/>
<circle cx="1556" cy="286" r="2.6" fill="none" stroke="#3b4660" stroke-width="1.1"/>
<circle cx="1610" cy="334" r="2.6" fill="none" stroke="#3b4660" stroke-width="1.1"/>
<circle cx="1542" cy="355" r="2.6" fill="none" stroke="#3b4660" stroke-width="1.1"/>
<circle cx="1640" cy="365" r="2.6" fill="none" stroke="#3b4660" stroke-width="1.1"/>
<circle cx="1705" cy="361" r="2.6" fill="none" stroke="#3b4660" stroke-width="1.1"/>
<circle cx="1577" cy="389" r="2.6" fill="none" stroke="#3b4660" stroke-width="1.1"/>
<circle cx="1665" cy="422" r="2.6" fill="none" stroke="#3b4660" stroke-width="1.1"/>
<circle cx="1615" cy="496" r="2.6" fill="none" stroke="#3b4660" stroke-width="1.1"/>
<circle cx="1690" cy="568" r="2.6" fill="none" stroke="#3b4660" stroke-width="1.1"/>
<circle cx="1688" cy="603" r="2.6" fill="none" stroke="#3b4660" stroke-width="1.1"/>
<circle cx="1537" cy="646" r="2.6" fill="none" stroke="#3b4660" stroke-width="1.1"/>
<circle cx="1603" cy="645" r="2.6" fill="none" stroke="#3b4660" stroke-width="1.1"/>
<circle cx="1517" cy="685" r="2.6" fill="none" stroke="#3b4660" stroke-width="1.1"/>
<circle cx="1614" cy="701" r="2.6" fill="none" stroke="#3b4660" stroke-width="1.1"/>
<circle cx="1567" cy="758" r="2.6" fill="none" stroke="#3b4660" stroke-width="1.1"/>
<circle cx="1503" cy="805" r="2.6" fill="none" stroke="#3b4660" stroke-width="1.1"/>
<text x="1785" y="77.5" text-anchor="middle" font-family="Liberation Sans" font-size="13.5" fill="#2a3447" stroke="#7d899c" stroke-width="2" stroke-opacity="0.6" paint-order="stroke">Люляково</text>
<text x="1666" y="150.5" text-anchor="middle" font-family="Liberation Sans" font-size="13.5" fill="#2a3447" stroke="#7d899c" stroke-width="2" stroke-opacity="0.6" paint-order="stroke">Добрич</text>
<text x="1790" y="208.5" text-anchor="middle" font-family="Liberation Sans" font-size="13.5" fill="#2a3447" stroke="#7d899c" stroke-width="2" stroke-opacity="0.6" paint-order="stroke">Соколово</text>
<text x="1900" y="233.5" text-anchor="middle" font-family="Liberation Sans" font-size="13.5" fill="#2a3447" stroke="#7d899c" stroke-width="2" stroke-opacity="0.6" paint-order="stroke">Каварна</text>
<text x="1541" y="248.5" text-anchor="middle" font-family="Liberation Sans" font-size="13.5" fill="#2a3447" stroke="#7d899c" stroke-width="2" stroke-opacity="0.6" paint-order="stroke">Вълчи дол</text>
<text x="1557" y="300.5" text-anchor="middle" font-family="Liberation Sans" font-size="13.5" fill="#2a3447" stroke="#7d899c" stroke-width="2" stroke-opacity="0.6" paint-order="stroke">Суворово</text>
<text x="1611" y="347.5" text-anchor="middle" font-family="Liberation Sans" font-size="13.5" fill="#2a3447" stroke="#7d899c" stroke-width="2" stroke-opacity="0.6" paint-order="stroke">Слънчево</text>
<text x="1542" y="369.5" text-anchor="middle" font-family="Liberation Sans" font-size="13.5" fill="#2a3447" stroke="#7d899c" stroke-width="2" stroke-opacity="0.6" paint-order="stroke">Девня</text>
<text x="1640" y="379.5" text-anchor="middle" font-family="Liberation Sans" font-size="13.5" fill="#2a3447" stroke="#7d899c" stroke-width="2" stroke-opacity="0.6" paint-order="stroke">Езерово</text>
<text x="1706" y="376.5" text-anchor="middle" font-family="Liberation Sans" font-size="13.5" fill="#2a3447" stroke="#7d899c" stroke-width="2" stroke-opacity="0.6" paint-order="stroke">Варна</text>
<text x="1577" y="403.5" text-anchor="middle" font-family="Liberation Sans" font-size="13.5" fill="#2a3447" stroke="#7d899c" stroke-width="2" stroke-opacity="0.6" paint-order="stroke">Разделна</text>
<text x="1665" y="436.5" text-anchor="middle" font-family="Liberation Sans" font-size="13.5" fill="#2a3447" stroke="#7d899c" stroke-width="2" stroke-opacity="0.6" paint-order="stroke">Приселци</text>
<text x="1616" y="511.5" text-anchor="middle" font-family="Liberation Sans" font-size="13.5" fill="#2a3447" stroke="#7d899c" stroke-width="2" stroke-opacity="0.6" paint-order="stroke">Долни чифлик</text>
<text x="1691" y="580.5" text-anchor="middle" font-family="Liberation Sans" font-size="13.5" fill="#2a3447" stroke="#7d899c" stroke-width="2" stroke-opacity="0.6" paint-order="stroke">Бяла</text>
<text x="1689" y="615.5" text-anchor="middle" font-family="Liberation Sans" font-size="13.5" fill="#2a3447" stroke="#7d899c" stroke-width="2" stroke-opacity="0.6" paint-order="stroke">Обзор</text>
<text x="1538" y="659.5" text-anchor="middle" font-family="Liberation Sans" font-size="13.5" fill="#2a3447" stroke="#7d899c" stroke-width="2" stroke-opacity="0.6" paint-order="stroke">Порой</text>
<text x="1603" y="658.5" text-anchor="middle" font-family="Liberation Sans" font-size="13.5" fill="#2a3447" stroke="#7d899c" stroke-width="2" stroke-opacity="0.6" paint-order="stroke">Кошарица</text>
<text x="1517" y="699.5" text-anchor="middle" font-family="Liberation Sans" font-size="13.5" fill="#2a3447" stroke="#7d899c" stroke-width="2" stroke-opacity="0.6" paint-order="stroke">Дъбник</text>
<text x="1615" y="715.5" text-anchor="middle" font-family="Liberation Sans" font-size="13.5" fill="#2a3447" stroke="#7d899c" stroke-width="2" stroke-opacity="0.6" paint-order="stroke">Несебър</text>
<text x="1569" y="772.5" text-anchor="middle" font-family="Liberation Sans" font-size="13.5" fill="#2a3447" stroke="#7d899c" stroke-width="2" stroke-opacity="0.6" paint-order="stroke">Поморие</text>
<text x="1505" y="820.5" text-anchor="middle" font-family="Liberation Sans" font-size="13.5" fill="#2a3447" stroke="#7d899c" stroke-width="2" stroke-opacity="0.6" paint-order="stroke">Бургас</text>
<text x="1505" y="589.5" text-anchor="middle" font-family="Liberation Sans" font-size="13.5" fill="#2a3447" stroke="#7d899c" stroke-width="2" stroke-opacity="0.6" paint-order="stroke">чко</text>
<text x="1495" y="623.5" text-anchor="middle" font-family="Liberation Sans" font-size="13.5" fill="#2a3447" stroke="#7d899c" stroke-width="2" stroke-opacity="0.6" paint-order="stroke">на</text>
</svg></div>
<div id="ov"></div>
<div id="dlg">
<div id="dh"><div class="abs" style="left:15px;top:0;line-height:46px;white-space:nowrap">Свойства объекта − МАЗ 103-3М</div><svg class="abs" style="left:1021px;top:16px" width="14" height="14" viewBox="0 0 14 14"><path d="M1 1 L13 13 M13 1 L1 13" stroke="#fff" stroke-width="1.8"/></svg></div>
<div class="tab" style="left:15px;top:64px;width:114px">Основное</div>
<div class="tab act" style="left:135px;top:64px;width:95px">Доступ</div>
<div class="tab" style="left:235.5px;top:64px;width:163px">Дополнительно</div>
<div class="tab" style="left:405.3px;top:64px;width:104.4px">Датчики</div>
<div class="tab" style="left:516.2px;top:64px;width:200.3px">Произвольные поля</div>
<div class="tab" style="left:724.3px;top:64px;width:176.5px">Группы объектов</div>
<div class="tab" style="left:15px;top:104.4px;width:201px">Качество вождения</div>
<div class="tab" style="left:222px;top:104.4px;width:168.4px">Характеристики</div>
<div class="tab" style="left:397.2px;top:104.4px;width:184.5px">Детектор поездок</div>
<div class="tab" style="left:589.3px;top:104.4px;width:181.4px">Техобслуживание</div>
<div class="abs" style="left:15px;top:148px;width:1020px;height:1px;background:#e1e4ea"></div>
<div class="inp" style="left:15.5px;top:159.5px;width:250px;height:34px"><div class="abs" style="left:10.5px;top:0;line-height:32px">Имя</div><svg class="abs" style="left:223px;top:12px" width="13" height="9" viewBox="0 0 13 9"><path d="M1.5 1.5 L6.5 6.5 L11.5 1.5" fill="none" stroke="#2c3850" stroke-width="2.2"/></svg></div>
<svg class="abs" style="left:15px;top:210px" width="24" height="21" viewBox="0 0 24 21"><path d="M1 2 H15" stroke="#b86ad6" stroke-width="3" stroke-linecap="round"/><path d="M1 8.5 H10" stroke="#f0a83a" stroke-width="3" stroke-linecap="round"/><path d="M1 15 H6" stroke="#5aa8f0" stroke-width="3" stroke-linecap="round"/><path d="M17 7 V19 M12.5 14.5 L17 19 L21.5 14.5" fill="none" stroke="#3d4a60" stroke-width="2.2"/></svg>
<div class="inp" style="left:43.4px;top:204.3px;width:222px;height:34.4px"><svg class="abs" style="left:11px;top:8px" width="18" height="18" viewBox="0 0 18 18" fill="none" stroke="#2c3850" stroke-width="1.6"><circle cx="7.5" cy="7.5" r="6"/><path d="M12 12 L16.5 16.5"/></svg><div class="abs" style="left:38px;top:0;line-height:32px;color:#b5bac4">Поиск</div></div>
<div class="inp" style="left:15.5px;top:249.3px;width:250px;height:455px;overflow:hidden"><div class="abs" style="left:10.5px;top:0;line-height:36px;font-weight:bold;font-size:17px;color:#16233d">Пользователи</div><div class="abs" style="left:0;top:35.7px;width:250px;height:34.7px;background:#eff0f3"></div><div class="abs" style="left:0;top:70.4px;width:250px;height:70px;background:#fff0c0"></div><div class="abs" style="left:10.5px;top:35.7px;line-height:34.7px">Logistics</div><div class="abs" style="left:10.5px;top:70.4px;line-height:35px">Logistics 1</div><div class="abs" style="left:10.5px;top:105.4px;line-height:35px">Logistics 2</div></div>
<div class="abs" style="left:282px;top:160px;line-height:24px;white-space:nowrap">Шаблоны прав доступа для объектов</div>
<div class="inp" style="left:281.3px;top:189px;width:753px;height:65.2px;overflow:hidden"><div class="abs" style="left:0;top:31.3px;width:753px;height:1px;background:#e1e4ea"></div><div class="abs" style="left:1px;top:0;width:31.5px;height:31.3px;background:#fdd9bf"></div><div class="abs" style="left:42.5px;top:1px;line-height:31px">Нет доступа</div><div class="abs" style="left:250px;top:0;width:1.5px;height:31.3px;background:#e1e1e4"></div><div class="abs" style="left:251.5px;top:0;width:31.5px;height:31.3px;background:#d4bfe3"></div><div class="abs" style="left:293.5px;top:1px;line-height:31px">Полный доступ</div><div class="abs" style="left:501px;top:0;width:32px;height:31.3px;background:#bfd3f0"></div><div class="abs" style="left:543.7px;top:1px;line-height:31px">Только чтение</div></div>
<div class="btn" style="left:805px;top:265.4px;width:229.5px;height:33.7px;line-height:31.5px;padding-top:2.5px">Редактировать шаблоны</div>
<div class="tbl" style="left:281px;width:359px"><div class="th"><span>Стандартные права доступа</span></div>
<div class="tr" style="top:46.00px"><div class="cb cb1"><svg width="11" height="9" viewBox="0 0 11 9"><path d="M1 4.5 L4 7.5 L10 1.5" fill="none" stroke="#fff" stroke-width="2.2"/></svg></div><div class="cb cb2 g"><svg width="11" height="9" viewBox="0 0 11 9"><path d="M1 4.5 L4 7.5 L10 1.5" fill="none" stroke="#fff" stroke-width="2.2"/></svg></div><div class="t">Просмотр элемента и его основн<span class="el">…</span></div></div>
<div class="tr" style="top:84.10px"><div class="cb cb1"><svg width="11" height="9" viewBox="0 0 11 9"><path d="M1 4.5 L4 7.5 L10 1.5" fill="none" stroke="#fff" stroke-width="2.2"/></svg></div><div class="cb cb2"></div><div class="t">Просмотр подробных свойств</div></div>
<div class="tr" style="top:122.20px"><div class="cb cb1"><svg width="11" height="9" viewBox="0 0 11 9"><path d="M1 4.5 L4 7.5 L10 1.5" fill="none" stroke="#fff" stroke-width="2.2"/></svg></div><div class="cb cb2"></div><div class="t">Управление доступом к элементу</div></div>
<div class="tr" style="top:160.30px"><div class="cb cb1"><svg width="11" height="9" viewBox="0 0 11 9"><path d="M1 4.5 L4 7.5 L10 1.5" fill="none" stroke="#fff" stroke-width="2.2"/></svg></div><div class="cb cb2"></div><div class="t">Удаление элемента</div></div>
<div class="tr" style="top:198.40px"><div class="cb cb1"><svg width="11" height="9" viewBox="0 0 11 9"><path d="M1 4.5 L4 7.5 L10 1.5" fill="none" stroke="#fff" stroke-width="2.2"/></svg></div><div class="cb cb2"></div><div class="t">Переименование элемента</div></div>
<div class="tr" style="top:236.50px"><div class="cb cb1"><svg width="11" height="9" viewBox="0 0 11 9"><path d="M1 4.5 L4 7.5 L10 1.5" fill="none" stroke="#fff" stroke-width="2.2"/></svg></div><div class="cb cb2"></div><div class="t">Просмотр произвольных полей</div></div>
<div class="tr" style="top:274.60px"><div class="cb cb1"><svg width="11" height="9" viewBox="0 0 11 9"><path d="M1 4.5 L4 7.5 L10 1.5" fill="none" stroke="#fff" stroke-width="2.2"/></svg></div><div class="cb cb2"></div><div class="t">Управление произвольными поля<span class="el">…</span></div></div>
<div class="tr" style="top:312.70px"><div class="cb cb1"><svg width="11" height="9" viewBox="0 0 11 9"><path d="M1 4.5 L4 7.5 L10 1.5" fill="none" stroke="#fff" stroke-width="2.2"/></svg></div><div class="cb cb2"></div><div class="t">Просмотр административных пол<span class="el">…</span></div></div>
<div class="tr" style="top:350.80px"><div class="cb cb1"><svg width="11" height="9" viewBox="0 0 11 9"><path d="M1 4.5 L4 7.5 L10 1.5" fill="none" stroke="#fff" stroke-width="2.2"/></svg></div><div class="cb cb2"></div><div class="t">Управление административными <span class="el">…</span></div></div>
<div class="tr" style="top:388.90px"><div class="cb cb1"><svg width="11" height="9" viewBox="0 0 11 9"><path d="M1 4.5 L4 7.5 L10 1.5" fill="none" stroke="#fff" stroke-width="2.2"/></svg></div><div class="cb cb2"></div><div class="t">Редактирование <span class="el">…</span></div></div>
</div>
<div class="tbl" style="left:655.4px;width:358px"><div class="th"><span>Специальные права доступа</span></div>
<div class="tr" style="top:46.00px"><div class="cb cb1"><svg width="11" height="9" viewBox="0 0 11 9"><path d="M1 4.5 L4 7.5 L10 1.5" fill="none" stroke="#fff" stroke-width="2.2"/></svg></div><div class="cb cb2"></div><div class="t">Просмотр настроек подключения <span class="el">…</span></div></div>
<div class="tr" style="top:84.10px"><div class="cb cb1"><svg width="11" height="9" viewBox="0 0 11 9"><path d="M1 4.5 L4 7.5 L10 1.5" fill="none" stroke="#fff" stroke-width="2.2"/></svg></div><div class="cb cb2"></div><div class="t">Редактирование настроек подкл<span class="el">…</span></div></div>
<div class="tr" style="top:122.20px"><div class="cb cb1"><svg width="11" height="9" viewBox="0 0 11 9"><path d="M1 4.5 L4 7.5 L10 1.5" fill="none" stroke="#fff" stroke-width="2.2"/></svg></div><div class="cb cb2"></div><div class="t">Создание, редактирование и удал<span class="el">…</span></div></div>
<div class="tr" style="top:160.30px"><div class="cb cb1"><svg width="11" height="9" viewBox="0 0 11 9"><path d="M1 4.5 L4 7.5 L10 1.5" fill="none" stroke="#fff" stroke-width="2.2"/></svg></div><div class="cb cb2"></div><div class="t">Редактирование счетчиков</div></div>
<div class="tr" style="top:198.40px"><div class="cb cb1"><svg width="11" height="9" viewBox="0 0 11 9"><path d="M1 4.5 L4 7.5 L10 1.5" fill="none" stroke="#fff" stroke-width="2.2"/></svg></div><div class="cb cb2"></div><div class="t">Удаление сообщений</div></div>
<div class="tr" style="top:236.50px"><div class="cb cb1"><svg width="11" height="9" viewBox="0 0 11 9"><path d="M1 4.5 L4 7.5 L10 1.5" fill="none" stroke="#fff" stroke-width="2.2"/></svg></div><div class="cb cb2"></div><div class="t">Отправка команд</div></div>
<div class="tr" style="top:274.60px"><div class="cb cb1"><svg width="11" height="9" viewBox="0 0 11 9"><path d="M1 4.5 L4 7.5 L10 1.5" fill="none" stroke="#fff" stroke-width="2.2"/></svg></div><div class="cb cb2"></div><div class="t">Управление событиями</div></div>
<div class="tr" style="top:312.70px"><div class="cb cb1"><svg width="11" height="9" viewBox="0 0 11 9"><path d="M1 4.5 L4 7.5 L10 1.5" fill="none" stroke="#fff" stroke-width="2.2"/></svg></div><div class="cb cb2"></div><div class="t">Просмотр интервалов техобслужи<span class="el">…</span></div></div>
<div class="tr" style="top:350.80px"><div class="cb cb1"><svg width="11" height="9" viewBox="0 0 11 9"><path d="M1 4.5 L4 7.5 L10 1.5" fill="none" stroke="#fff" stroke-width="2.2"/></svg></div><div class="cb cb2"></div><div class="t">Создание, редактирование и удал<span class="el">…</span></div></div>
<div class="tr" style="top:388.90px"><div class="cb cb1"><svg width="11" height="9" viewBox="0 0 11 9"><path d="M1 4.5 L4 7.5 L10 1.5" fill="none" stroke="#fff" stroke-width="2.2"/></svg></div><div class="cb cb2"></div><div class="t">Импорт <span class="el">…</span></div></div>
</div>
<div class="abs" style="left:1014px;top:310px;width:21px;height:391.7px;background:#f1f1f1"><svg class="abs" style="left:5.5px;top:8px" width="10" height="6" viewBox="0 0 10 6"><path d="M0 6 L5 0 L10 6Z" fill="#a3a3a3"/></svg><div class="abs" style="left:2.2px;top:21px;width:16.7px;height:208.7px;background:#c1c1c1"></div><svg class="abs" style="left:5.5px;top:377px" width="10" height="6" viewBox="0 0 10 6"><path d="M0 0 L5 6 L10 0Z" fill="#505050"/></svg></div>
<div class="btn" style="left:15.3px;top:732px;width:150.3px;height:34.5px;line-height:32.5px;padding-top:1.5px">Экспорт в файл</div>
<div class="btn" style="left:815.3px;top:732.2px;width:104.2px;height:34.4px;line-height:32.4px;padding-top:1.5px">Отмена</div>
<div class="abs" style="left:930px;top:732px;width:105px;height:35px;border-radius:6px;background:#4a8af5;color:#fff;text-align:center;line-height:35px;padding-top:1.5px">OK</div>
</div>
</body></html>
